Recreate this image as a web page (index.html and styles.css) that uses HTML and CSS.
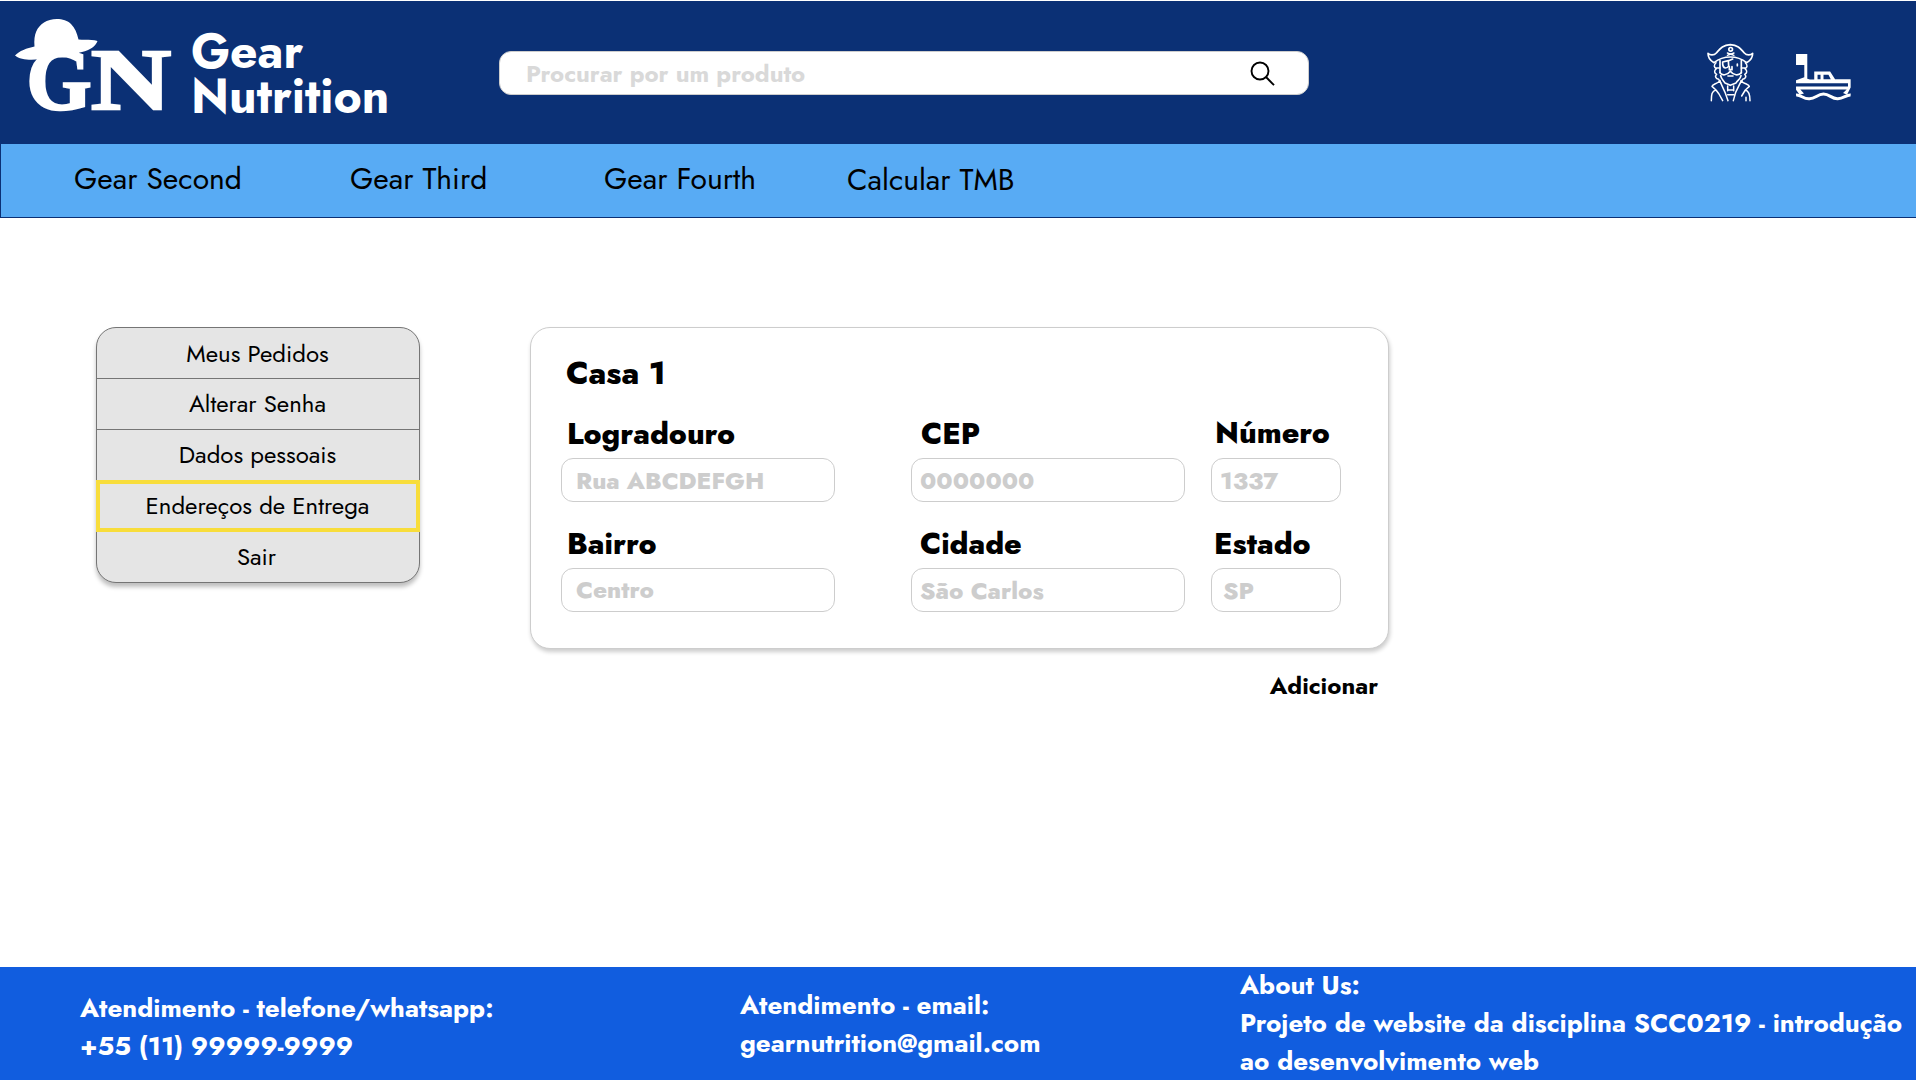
FILE: index.html
```html
<!DOCTYPE html>
<html lang="pt-BR">
<head>
<meta charset="utf-8">
<title>Gear Nutrition</title>
<link rel="stylesheet" href="styles.css">
</head>
<body>
<header class="header">
  <svg class="logo" viewBox="0 0 180 130" fill="#fff" aria-label="GN">
    <path d="M15 55.500C19 51 27 48 34.500 46.500C33.500 34 37 27 44 22.500C51 17.500 65 17.500 71 24C75 28 77 33 78.500 39.500C85 40 92 39 97.500 41C96 46 90 50 82 52C76 53.500 73 56 67 57C56 58 47 56 40 59C32 60.500 20 60 15 55.500Z"/>
    <text class="logo-letter" x="26.500" y="108.500" textLength="65" lengthAdjust="spacingAndGlyphs">G</text>
    <text class="logo-letter" x="91" y="108.500" textLength="80" lengthAdjust="spacingAndGlyphs">N</text>
  </svg>
  <div class="brand"><span>Gear</span><span>Nutrition</span></div>
  <form class="search">
    <input class="search-input" type="text" placeholder="Procurar por um produto">
    <svg class="search-icon" viewBox="0 0 26 26" fill="none" stroke="#000" stroke-width="1.900"><circle cx="10" cy="10" r="8.500"/><path d="M16 16l8 8.200"/></svg>
  </form>
  <svg class="pirate" viewBox="0 0 168 192" fill="none" stroke="#fff" stroke-width="5" stroke-linejoin="round" stroke-linecap="round">
    <path d="M36 68C24 62 18 52 18 40C23 46 36 47 43 39C53 28 60 15 85 14C110 15 117 28 127 39C134 47 147 46 152 40C152 52 146 62 134 68C120 57 104 51 85 51C66 51 50 57 36 68Z"/>
    <circle cx="86" cy="28" r="5.500"/><path d="M76 39L96 46M96 39L76 46" stroke-width="4"/>
    <path d="M54 62V98M118 62V98"/>
    <path d="M62 66L79 62L80 78Q77 84 70 84Q61 82 62 66M80 62L92 57M106 72V77"/>
    <path d="M42 68C34 76 36 82 43 86C35 93 37 99 44 103C37 110 42 116 50 118L56 128M130 68C138 76 136 82 129 86C137 93 135 99 128 103C135 110 130 116 122 118L116 128M43 84H54M118 84H129" stroke-width="4.500"/>
    <path d="M54 98C60 108 76 106 85 94C94 106 110 108 118 98M82 80V89H90V80M78 108H93"/>
    <path d="M56 107C58 119 66 122 69 129L85 136L102 129C106 121 115 119 117 107"/>
    <path d="M54 122C44 133 31 132 30 139L42 150C29 153 28 165 28 182M117 122C127 133 141 132 142 139L130 150C142 153 144 165 144 182M54 124L69 157L78 182M117 124L101 157L94 182M42 150L51 162L62 182M130 150L119 168M77 138V152M95 138V152M77 150H95M77 164H95M132 172V182" stroke-width="4.500"/>
  </svg>
  <svg class="boat" viewBox="0 0 166 142" fill="#fff">
    <path d="M0 0H34V75L42 77H55V53H103L118 76H165V101L154 123L142 118L153 107H13L24 119L11 123L0 108V98H157V88H0V79L25 70V33H0ZM65 63V76H74V63ZM83 63V76H105L98 63Z" fill-rule="evenodd"/>
    <path d="M0 124C15 122 22 137 41 135C59 135 64 121 83 121C102 121 106 135 125 135C143 136 151 123 165 124" fill="none" stroke="#fff" stroke-width="9"/>
  </svg>
</header>
<nav class="nav">
  <a>Gear Second</a><a>Gear Third</a><a>Gear Fourth</a><a class="nav-tmb">Calcular TMB</a>
</nav>
<main class="main">
  <ul class="menu">
    <li class="menu-item divided">Meus Pedidos</li>
    <li class="menu-item divided password">Alterar Senha</li>
    <li class="menu-item">Dados pessoais</li>
    <li class="menu-item active">Endereços de Entrega</li>
    <li class="menu-item exit">Sair</li>
  </ul>
  <section class="addresses">
    <div class="card">
      <h2 class="card-title">Casa 1</h2>
      <div class="fields">
        <label class="field street"><span class="field-name">Logradouro</span><input class="field-input" placeholder="Rua ABCDEFGH"></label>
        <label class="field zip"><span class="field-name">CEP</span><input class="field-input" placeholder="0000000"></label>
        <label class="field number"><span class="field-name">Número</span><input class="field-input" placeholder="1337"></label>
        <label class="field district"><span class="field-name">Bairro</span><input class="field-input" placeholder="Centro"></label>
        <label class="field city"><span class="field-name">Cidade</span><input class="field-input" placeholder="São Carlos"></label>
        <label class="field state"><span class="field-name">Estado</span><input class="field-input" placeholder="SP"></label>
      </div>
    </div>
    <a class="add">Adicionar</a>
  </section>
</main>
<footer class="footer">
  <div class="phone"><p>Atendimento - telefone/whatsapp:</p><p>+55 (11) 99999-9999</p></div>
  <div class="email"><p>Atendimento - email:</p><p>gearnutrition@gmail.com</p></div>
  <div class="about"><p>About Us:</p><p>Projeto de website da disciplina SCC0219 - introdução</p><p>ao desenvolvimento web</p></div>
</footer>
</body>
</html>
```
FILE: styles.css
```css
* { box-sizing: border-box; }
body {
  margin: 0;
  padding-top: 1px;
  height: 1080px;
  display: flex;
  flex-direction: column;
  overflow: hidden;
  background: #fff;
  color: #000;
  font-family: Jost, Lato, sans-serif;
}
p, h2, ul { margin: 0; padding: 0; }
input { font-family: inherit; outline: 0; }

.header {
  height: 143px;
  flex: none;
  display: flex;
  align-items: flex-start;
  background: #0b3075;
}
.logo { width: 180px; height: 130px; margin-top: -1px; }
.logo-letter {
  font: bold 87px "Liberation Serif", serif;
  stroke: #fff;
  stroke-width: 2.5px;
}
.brand {
  width: 308px;
  margin: 28px 0 0 11px;
  display: flex;
  flex-direction: column;
  color: #fff;
  font-size: 48px;
  font-weight: 700;
  line-height: 45px;
}
.search {
  width: 810px;
  height: 44px;
  margin-top: 50px;
  padding: 1px 32px 0 26px;
  display: flex;
  align-items: center;
  background: #fff;
  border: 1px solid #cdcdcd;
  border-radius: 12px;
}
.search-input {
  flex: 1;
  padding: 0;
  border: 0;
  background: none;
  font-size: 24px;
  font-weight: 700;
}
.search-input::placeholder { color: #d9d9d9; opacity: 1; }
.search-icon { width: 26px; height: 26px; }
.pirate { width: 56px; height: 64px; margin: 39px 0 0 393px; }
.boat { width: 55px; height: 47px; margin: 53px 0 0 38px; }

.nav {
  height: 74px;
  flex: none;
  display: grid;
  grid-template-columns: 276px 254px 243px auto;
  padding: 17px 0 0 73px;
  background: #58abf4;
  border: solid #0b3075;
  border-width: 0 0 1px 1px;
  font-size: 30px;
  line-height: 36px;
}
.nav-tmb { padding-top: 1px; }

.main {
  flex: 1;
  display: flex;
  align-items: flex-start;
  gap: 110px;
  padding: 109px 0 0 96px;
}
.menu {
  width: 324px;
  list-style: none;
  background: #e5e5e5;
  border: 1px solid #757575;
  border-radius: 20px;
  box-shadow: 0 4px 4px rgba(0, 0, 0, 0.25);
}
.menu-item {
  height: 50px;
  padding: 0 1px 1px 0;
  display: flex;
  align-items: center;
  justify-content: center;
  font-size: 24px;
}
.menu-item.divided { height: 51px; padding-bottom: 0; border-bottom: 1px solid #757575; }
.menu-item.password { padding-bottom: 2px; }
.menu-item.active { height: 52px; margin: 0 -1px; padding-bottom: 2px; border: 4px solid #f8dd3b; }
.menu-item.exit { padding-right: 3px; }

.addresses {
  width: 859px;
  display: flex;
  flex-direction: column;
  align-items: flex-end;
  gap: 21px;
}
.card {
  width: 859px;
  height: 322px;
  padding: 25px 30px 0;
  background: #fff;
  border: 1px solid #cdcdcd;
  border-radius: 20px;
  box-shadow: 1px 3px 4px rgba(0, 0, 0, 0.2);
}
.card-title {
  padding-left: 5px;
  font-size: 32px;
  font-weight: 800;
  line-height: 40px;
}
.fields {
  margin-top: 22px;
  display: grid;
  grid-template-columns: 274px 274px 130px;
  column-gap: 76px;
  row-gap: 23px;
}
.field { display: flex; flex-direction: column; gap: 6px; }
.number, .state { margin-left: -50px; width: 130px; }
.field-name {
  height: 37px;
  padding-left: 6px;
  font-size: 30px;
  font-weight: 800;
  line-height: 37px;
}
.field-input {
  width: 100%;
  height: 44px;
  padding: 1px 0 0 14px;
  background: #fff;
  border: 1px solid #cdcdcd;
  border-radius: 12px;
  font-size: 24px;
  font-weight: 800;
}
.field-input::placeholder { color: #cdcdcd; opacity: 1; }
.zip .field-name { padding-left: 10px; }
.zip .field-input { padding-left: 8px; }
.number .field-name { padding-left: 4px; line-height: 35px; }
.number .field-input { padding-left: 8px; }
.district .field-input { padding: 0 0 1px 14px; }
.city .field-name { padding-left: 9px; }
.city .field-input { padding-left: 8px; }
.state .field-name { padding-left: 3px; }
.state .field-input { padding-left: 11px; }
.add {
  padding-right: 11px;
  font-size: 24px;
  font-weight: 700;
  line-height: 31px;
}

.footer {
  height: 113px;
  flex: none;
  display: grid;
  grid-template-columns: 660px 500px auto;
  padding-left: 80px;
  background: #115ddf;
  color: #fff;
  font-size: 26px;
  font-weight: 700;
  line-height: 38px;
  white-space: nowrap;
}
.phone { padding-top: 22px; }
.email { padding-top: 19px; }
.about { margin-top: -1px; }
```
